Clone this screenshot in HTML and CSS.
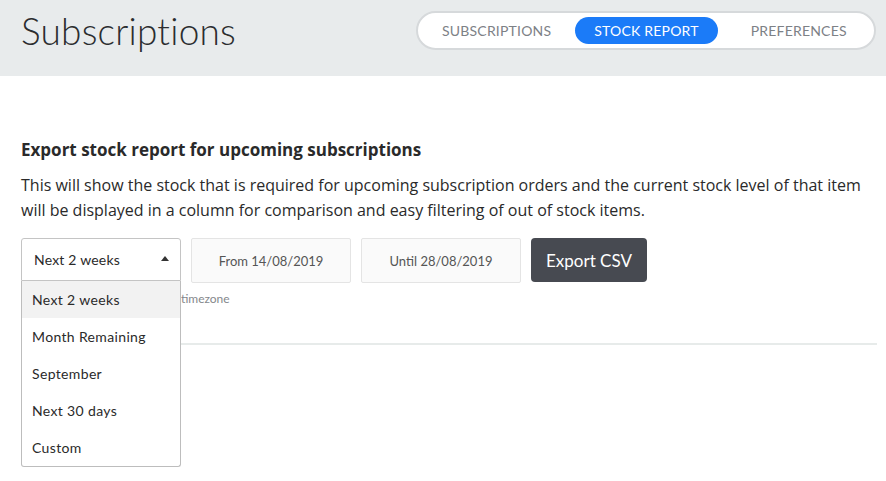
FILE: index.html
```html
<!DOCTYPE html>
<html>
<head>
<meta charset="utf-8">
<link rel="stylesheet" href="styles.css">
</head>
<body>
<header class="top">
  <h1 class="title">Subscriptions</h1>
  <nav class="tabs">
    <a class="tab">SUBSCRIPTIONS</a>
    <a class="tab active">STOCK REPORT</a>
    <a class="tab last">PREFERENCES</a>
  </nav>
</header>
<main class="content">
  <h2 class="heading">Export stock report for upcoming subscriptions</h2>
  <p class="desc">This will show the stock that is required for upcoming subscription orders and the current stock level of that item will be displayed in a column for comparison and easy filtering of out of stock items.</p>
  <div class="controls">
    <div class="select">
      <div class="select-box">
        <span>Next 2 weeks</span>
        <svg class="caret" width="8" height="5" viewBox="0 0 8 5"><path d="M0 5 L4 0 L8 5 Z" fill="#333"/></svg>
      </div>
      <ul class="menu">
        <li class="item hover">Next 2 weeks</li>
        <li class="item">Month Remaining</li>
        <li class="item">September</li>
        <li class="item">Next 30 days</li>
        <li class="item">Custom</li>
      </ul>
    </div>
    <div class="date">From 14/08/2019</div>
    <div class="date">Until 28/08/2019</div>
    <button class="export">Export CSV</button>
  </div>
  <p class="hint">Dates are shown in your store timezone</p>
  <hr class="rule">
</main>
</body>
</html>
```

FILE: styles.css
```css
* { box-sizing: border-box; }
html, body { min-height: 100%; }
body {
  margin: 0;
  min-height: 481px;
  font-family: Lato, "Open Sans", sans-serif;
  color: #2a2a2a;
  background: #fff;
}
.top {
  height: 76px;
  background: #e8ebec;
  display: flex;
  justify-content: space-between;
  align-items: flex-start;
  padding: 0 10px 0 21px;
}
.title {
  margin: 8px 0 0;
  font-size: 37px;
  font-weight: 300;
  color: #2b2d2f;
  letter-spacing: 0.2px;
}
.tabs {
  margin-top: 11px;
  width: 460px;
  height: 39px;
  background: #fff;
  border: 2px solid #d6d9db;
  border-radius: 20px;
  display: flex;
  align-items: center;
  padding: 0 3px 0 3px;
}
.tab {
  font-size: 14px;
  color: #7d8186;
  letter-spacing: 0.2px;
  padding: 0 21px;
  height: 27px;
  line-height: 27px;
  border-radius: 14px;
  white-space: nowrap;
}
.tab.active {
  margin-left: 3px;
  padding: 0 19px;
  background: #1b7bf8;
  color: #fff;
}
.tab.last { margin-left: 12px; }
.content {
  padding: 0 9px 0 21px;
}
.heading {
  margin: 62px 0 0;
  font-family: "Open Sans", Lato, sans-serif;
  font-size: 17px;
  font-weight: 700;
  line-height: 24px;
  color: #2a2a2a;
}
.desc {
  margin: 11px 0 0;
  font-family: "Open Sans", Lato, sans-serif;
  font-size: 16px;
  line-height: 25px;
  color: #2a2a2a;
}
.controls {
  margin-top: 15px;
  display: flex;
  gap: 10px;
  align-items: flex-start;
}
.select {
  position: relative;
  width: 160px;
}
.select-box {
  height: 43px;
  border: 1px solid #c4c4c4;
  border-radius: 3px 3px 0 0;
  display: flex;
  align-items: center;
  justify-content: space-between;
  padding: 0 11px 0 12px;
  font-size: 14px;
  letter-spacing: 0.2px;
  color: #2a2a2a;
  background: #fff;
}
.caret { margin-top: -2px; }
.menu {
  position: absolute;
  top: 43px;
  left: 0;
  width: 160px;
  margin: 0;
  padding: 0;
  list-style: none;
  background: #fff;
  border: 1px solid #bdbdbd;
  border-top: none;
  border-radius: 0 0 3px 3px;
  z-index: 2;
}
.item {
  height: 37px;
  line-height: 37px;
  padding-left: 10px;
  font-size: 14px;
  letter-spacing: 0.35px;
  color: #2a2a2a;
}
.item.hover { background: #f2f2f2; }
.date {
  width: 160px;
  height: 45px;
  border: 1px solid #e4e4e4;
  border-radius: 2px;
  background: #fafafa;
  display: flex;
  align-items: center;
  justify-content: center;
  font-size: 13px;
  color: #555;
}
.export {
  height: 44px;
  padding: 0 15px;
  border: none;
  border-radius: 4px;
  background: #474a51;
  color: #fff;
  font-family: Lato, "Open Sans", sans-serif;
  font-size: 17px;
}
.hint {
  margin: 8px 0 0;
  font-size: 12px;
  color: #85888c;
}
.rule {
  margin: 37px 0 0;
  border: none;
  height: 2px;
  background: #e7ebea;
}
```
